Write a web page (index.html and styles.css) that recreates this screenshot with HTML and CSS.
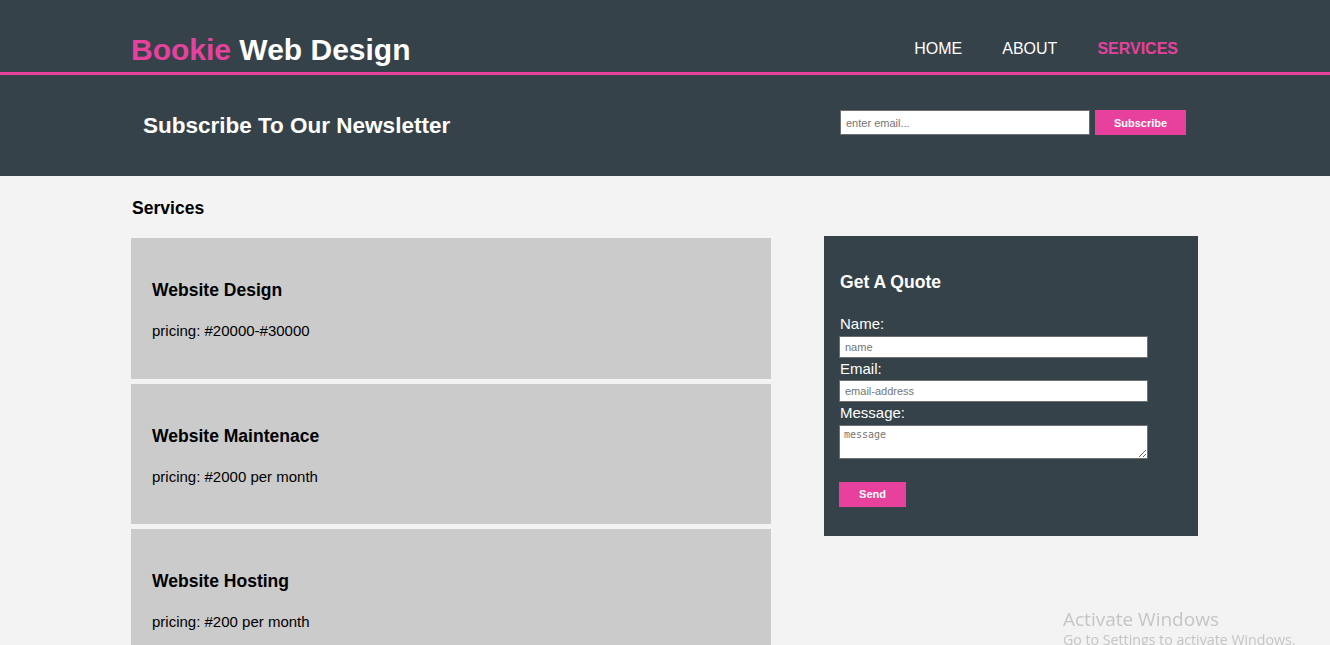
FILE: index.html
```html
<!DOCTYPE html>
<html lang="en">
<head>
<meta charset="utf-8">
<title>Bookie Web Design | Services</title>
<link rel="stylesheet" href="styles.css">
</head>
<body>
<header class="site-header">
  <div class="container header-inner">
    <div class="branding">
      <h1 class="logo"><span class="highlight">Bookie</span> Web Design</h1>
    </div>
    <nav class="nav">
      <a class="nav-link" href="#">HOME</a>
      <a class="nav-link" href="#">ABOUT</a>
      <a class="nav-link current" href="#">SERVICES</a>
    </nav>
  </div>
</header>

<section class="newsletter">
  <div class="container newsletter-inner">
    <h1 class="newsletter-title">Subscribe To Our Newsletter</h1>
    <form class="newsletter-form">
      <input class="email-input" type="email" placeholder="enter email...">
      <button class="btn subscribe-btn" type="button">Subscribe</button>
    </form>
  </div>
</section>

<section class="main">
  <div class="container main-inner">
    <article class="services">
      <h3 class="page-title">Services</h3>
      <ul class="service-list">
        <li class="service">
          <h3 class="service-name">Website Design</h3>
          <p class="service-price">pricing: #20000-#30000</p>
        </li>
        <li class="service">
          <h3 class="service-name">Website Maintenace</h3>
          <p class="service-price">pricing: #2000 per month</p>
        </li>
        <li class="service">
          <h3 class="service-name">Website Hosting</h3>
          <p class="service-price">pricing: #200 per month</p>
        </li>
      </ul>
    </article>
    <aside class="sidebar">
      <div class="quote">
        <h3 class="quote-title">Get A Quote</h3>
        <form class="quote-form">
          <label class="field-label">Name:</label>
          <input class="field" type="text" placeholder="name">
          <label class="field-label">Email:</label>
          <input class="field" type="email" placeholder="email-address">
          <label class="field-label">Message:</label>
          <textarea class="field field-area" placeholder="message"></textarea>
          <button class="btn send-btn" type="button">Send</button>
        </form>
      </div>
    </aside>
  </div>
</section>

<div class="watermark">
  <div class="wm-title">Activate Windows</div>
  <div class="wm-sub">Go to Settings to activate Windows.</div>
</div>
</body>
</html>
```

FILE: styles.css
```css
html, body {
  margin: 0;
  padding: 0;
}
html {
  overflow: hidden;
}
body {
  font-family: "Liberation Sans", Arial, sans-serif;
  font-size: 15px;
  line-height: 1.15;
  background: #f3f3f3;
  color: #000;
}

.container {
  width: 1068px;
  margin: 0 auto;
  padding-right: 1px;
  box-sizing: border-box;
}

/* Header */
.site-header {
  background: #35424a;
  border-bottom: 3px solid #e8419d;
  height: 72px;
  color: #fff;
}
.header-inner {
  display: flex;
  justify-content: space-between;
  align-items: flex-start;
}
.logo {
  margin: 0;
  padding-top: 33px;
  font-size: 30px;
  font-weight: bold;
  line-height: 33px;
}
.highlight {
  color: #e8419d;
}
.nav {
  display: flex;
  padding-top: 40px;
}
.nav-link {
  color: #fff;
  text-decoration: none;
  font-size: 16px;
  line-height: 18px;
  padding: 0 20px;
}
.nav-link.current {
  color: #e8419d;
  font-weight: bold;
}

/* Newsletter */
.newsletter {
  background: #35424a;
  color: #fff;
  height: 101px;
}
.newsletter-inner {
  height: 100%;
  display: flex;
  justify-content: space-between;
  align-items: center;
  padding-left: 12px;
  padding-right: 13px;
}
.newsletter-title {
  margin: 0;
  font-size: 22.5px;
  line-height: 26px;
}
.newsletter-form {
  display: flex;
  gap: 5px;
  margin-top: -6px;
}
.email-input {
  width: 250px;
  height: 25px;
  box-sizing: border-box;
  border: 1px solid #6f6f6f;
  padding: 0 5px;
  font-family: "Liberation Sans", Arial, sans-serif;
  font-size: 11px;
  outline: none;
}
.email-input::placeholder,
.field::placeholder {
  color: #757575;
}
.btn {
  background: #e8419d;
  color: #fff;
  border: none;
  font-family: "Liberation Sans", Arial, sans-serif;
  font-weight: bold;
  font-size: 11px;
  cursor: pointer;
}
.subscribe-btn {
  width: 91px;
  height: 25px;
}

/* Main */
.main-inner {
  display: flex;
  justify-content: space-between;
  align-items: flex-start;
}
.services {
  width: 640px;
}
.page-title {
  margin: 22px 0 0;
  padding-left: 1px;
  font-size: 17.55px;
  line-height: 20px;
}
.service-list {
  list-style: none;
  margin: 20px 0 0;
  padding: 0;
}
.service {
  height: 140.5px;
  box-sizing: border-box;
  background: #cbcbcb;
  margin-bottom: 5px;
  padding: 42px 21px 0;
}
.service-name {
  margin: 0;
  font-size: 17.55px;
  line-height: 20px;
}
.service-price {
  margin: 22px 0 0;
  font-size: 15px;
  line-height: 17px;
}

/* Sidebar */
.sidebar {
  width: 374px;
  margin-top: 60px;
}
.quote {
  background: #35424a;
  color: #fff;
  height: 300px;
  box-sizing: border-box;
  padding: 36px 15px 0;
}
.quote-title {
  margin: 0 0 0 1px;
  font-size: 17.55px;
  line-height: 20px;
}
.quote-form {
  display: flex;
  flex-direction: column;
  align-items: flex-start;
  margin-top: 23px;
}
.field-label {
  font-size: 15px;
  line-height: 17px;
  margin-left: 1px;
  margin-bottom: 3.5px;
}
.field {
  width: 309px;
  height: 22px;
  box-sizing: border-box;
  border: 1px solid #6f6f6f;
  padding: 0 5px;
  margin-bottom: 2px;
  font-family: "Liberation Sans", Arial, sans-serif;
  font-size: 11px;
  outline: none;
}
.field-area {
  height: 34px;
  padding: 3px 4px;
  font-family: "DejaVu Sans Mono", "Liberation Mono", monospace;
  font-size: 10px;
  resize: vertical;
}
.send-btn {
  width: 67px;
  height: 25px;
  margin-top: 21px;
}

/* Watermark overlay */
.watermark {
  position: fixed;
  left: 1063px;
  top: 607px;
  color: #c5c5c5;
  font-family: "Open Sans", "Noto Sans", sans-serif;
  white-space: nowrap;
  pointer-events: none;
}
.wm-title {
  font-size: 19px;
  line-height: 24px;
}
.wm-sub {
  font-size: 14.2px;
  line-height: 18px;
}
```
